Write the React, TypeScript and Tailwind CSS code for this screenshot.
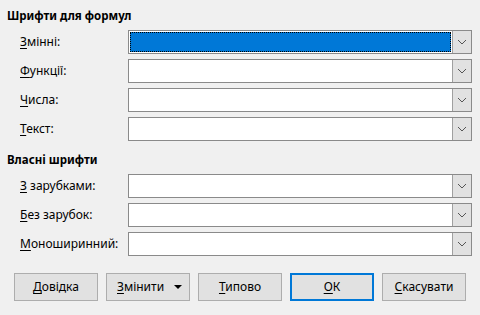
import { ReactNode } from 'react'

const font = { fontFamily: '"Segoe UI", "Noto Sans", "Open Sans", sans-serif' }

function Mn({ k, rest }: { k: string; rest: string }) {
  return (
    <span className="whitespace-nowrap">
      <span className="underline underline-offset-2">{k}</span>
      {rest}
    </span>
  )
}

function Combo({ focused = false }: { focused?: boolean }) {
  return (
    <div className="flex h-[24px] min-w-0 flex-1 border border-[#8a8a8a] bg-white">
      <div className="flex-1 p-[1px]">
        {focused && (
          <div className="h-full w-full border border-dotted border-black bg-[#0078d7]" />
        )}
      </div>
      <div className="flex w-[19px] items-center justify-center border-l border-[#a0a0a0] bg-[#e1e1e1]">
        <svg width="10" height="6" viewBox="0 0 10 6">
          <path d="M1 1 L5 5 L9 1" fill="none" stroke="#555" strokeWidth="1" />
        </svg>
      </div>
    </div>
  )
}

function Row({ label, focused }: { label: ReactNode; focused?: boolean }) {
  return (
    <div className="flex items-center">
      <div className="w-[121px] shrink-0 pl-[13px] text-[12px] text-black">{label}</div>
      <Combo focused={focused} />
    </div>
  )
}

function Btn({
  children,
  primary = false,
}: {
  children: ReactNode
  primary?: boolean
}) {
  return (
    <button
      className={`flex h-[28px] w-[84px] items-center justify-center bg-[#e1e1e1] text-[12px] text-black ${
        primary ? 'border-2 border-[#0078d7]' : 'border border-[#adadad]'
      }`}
    >
      {children}
    </button>
  )
}

export default function App() {
  return (
    <div className="h-[315px] w-[480px] bg-[#f0f0f0] pl-[7px] pr-[8px] pt-[8px]" style={font}>
      <div className="text-[11.5px] font-bold leading-[16px] text-black">Шрифти для формул</div>
      <div className="mt-[6px] flex flex-col gap-[5px]">
        <Row label={<Mn k="З" rest="мінні:" />} focused />
        <Row label={<Mn k="Ф" rest="ункції:" />} />
        <Row label={<Mn k="Ч" rest="исла:" />} />
        <Row label={<Mn k="Т" rest="екст:" />} />
      </div>
      <div className="mt-[11px] text-[11.5px] font-bold leading-[16px] text-black">Власні шрифти</div>
      <div className="mt-[6px] flex flex-col gap-[5px]">
        <Row label={<Mn k="З" rest=" зарубками:" />} />
        <Row label={<Mn k="Б" rest="ез зарубок:" />} />
        <Row label={<Mn k="М" rest="оноширинний:" />} />
      </div>
      <div className="mt-[17px] flex gap-[8px] pl-[7px]">
        <Btn>
          <Mn k="Д" rest="овідка" />
        </Btn>
        <button className="flex h-[28px] w-[84px] items-center justify-between border border-[#adadad] bg-[#e1e1e1] pl-[10px] pr-[7px] text-[12px] text-black">
          <Mn k="З" rest="мінити" />
          <svg width="8" height="4" viewBox="0 0 8 4">
            <path d="M0 0 L8 0 L4 4 Z" fill="#000" />
          </svg>
        </button>
        <Btn>
          <Mn k="Т" rest="ипово" />
        </Btn>
        <Btn primary>
          <Mn k="О" rest="К" />
        </Btn>
        <Btn>
          <Mn k="С" rest="касувати" />
        </Btn>
      </div>
    </div>
  )
}
